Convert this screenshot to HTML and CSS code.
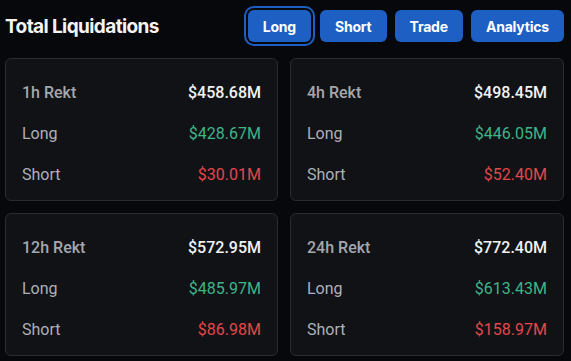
FILE: index.html
```html
<!DOCTYPE html>
<html lang="en">
<head>
  <meta charset="UTF-8">
  <meta name="viewport" content="width=device-width, initial-scale=1.0">
  <title>Total Liquidations</title>
  <link rel="stylesheet" href="styles.css">
</head>
<body>
  <div class="panel">
    <div class="panel-head">
      <h1>Total Liquidations</h1>
      <div class="tabs">
        <button class="tab-btn active">Long</button>
        <button class="tab-btn">Short</button>
        <button class="tab-btn">Trade</button>
        <button class="tab-btn">Analytics</button>
      </div>
    </div>

    <div class="rekt-grid">
      <!-- 1h -->
      <div class="rekt-card">
        <div class="rekt-row total"><span>1h Rekt</span><span class="val">$458.68M</span></div>
        <div class="rekt-row"><span>Long</span><span class="val long">$428.67M</span></div>
        <div class="rekt-row"><span>Short</span><span class="val short">$30.01M</span></div>
      </div>
      <!-- 4h -->
      <div class="rekt-card">
        <div class="rekt-row total"><span>4h Rekt</span><span class="val">$498.45M</span></div>
        <div class="rekt-row"><span>Long</span><span class="val long">$446.05M</span></div>
        <div class="rekt-row"><span>Short</span><span class="val short">$52.40M</span></div>
      </div>
      <!-- 12h -->
      <div class="rekt-card">
        <div class="rekt-row total"><span>12h Rekt</span><span class="val">$572.95M</span></div>
        <div class="rekt-row"><span>Long</span><span class="val long">$485.97M</span></div>
        <div class="rekt-row"><span>Short</span><span class="val short">$86.98M</span></div>
      </div>
      <!-- 24h -->
      <div class="rekt-card">
        <div class="rekt-row total"><span>24h Rekt</span><span class="val">$772.40M</span></div>
        <div class="rekt-row"><span>Long</span><span class="val long">$613.43M</span></div>
        <div class="rekt-row"><span>Short</span><span class="val short">$158.97M</span></div>
      </div>
    </div>
  </div>
</body>
</html>
```

FILE: styles.css
```css
* {
  box-sizing: border-box;
  margin: 0;
  padding: 0;
  font-family: Roboto, 'Noto Sans', Arial, sans-serif;
}

body {
  background: #07080b;
  color: #f2f2f2;
  width: 571px;
  height: 361px;
  overflow: hidden;
}

.panel {
  padding: 10px 7px 0 5px;
}

.panel-head {
  display: flex;
  justify-content: space-between;
  align-items: center;
  height: 32px;
}

h1 {
  font-family: Inter, Roboto, sans-serif;
  font-size: 19px;
  font-weight: 700;
  letter-spacing: -0.6px;
  color: #f4f4f4;
}

.tabs {
  display: flex;
  gap: 8px;
}

.tab-btn {
  font-family: Inter, Roboto, sans-serif;
  background: #1d5fc3;
  color: #fff;
  border: none;
  height: 32px;
  padding: 0 15px;
  border-radius: 6px;
  font-size: 14px;
  font-weight: 700;
  letter-spacing: -0.2px;
  cursor: pointer;
}

.tab-btn.active {
  margin-right: 1px;
  box-shadow: 0 0 0 2px #07080b, 0 0 0 4px #1d5fc3;
}

.rekt-grid {
  display: grid;
  grid-template-columns: 273px 274px;
  grid-auto-rows: 143px;
  gap: 12px;
  margin-top: 16px;
}

.rekt-card {
  background: #111216;
  border: 1px solid #2a2c32;
  border-radius: 6px;
  padding: 13px 16px 5px 16px;
}

.rekt-row {
  display: flex;
  justify-content: space-between;
  align-items: center;
  height: 41px;
  font-size: 16px;
  color: #aeb0b6;
}

.rekt-row.total {
  font-weight: 500;
  color: #a5a7ad;
}

.rekt-row.total .val {
  color: #f2f2f2;
}

.val.long {
  color: #3eb489;
}

.val.short {
  color: #e2474b;
}
```
